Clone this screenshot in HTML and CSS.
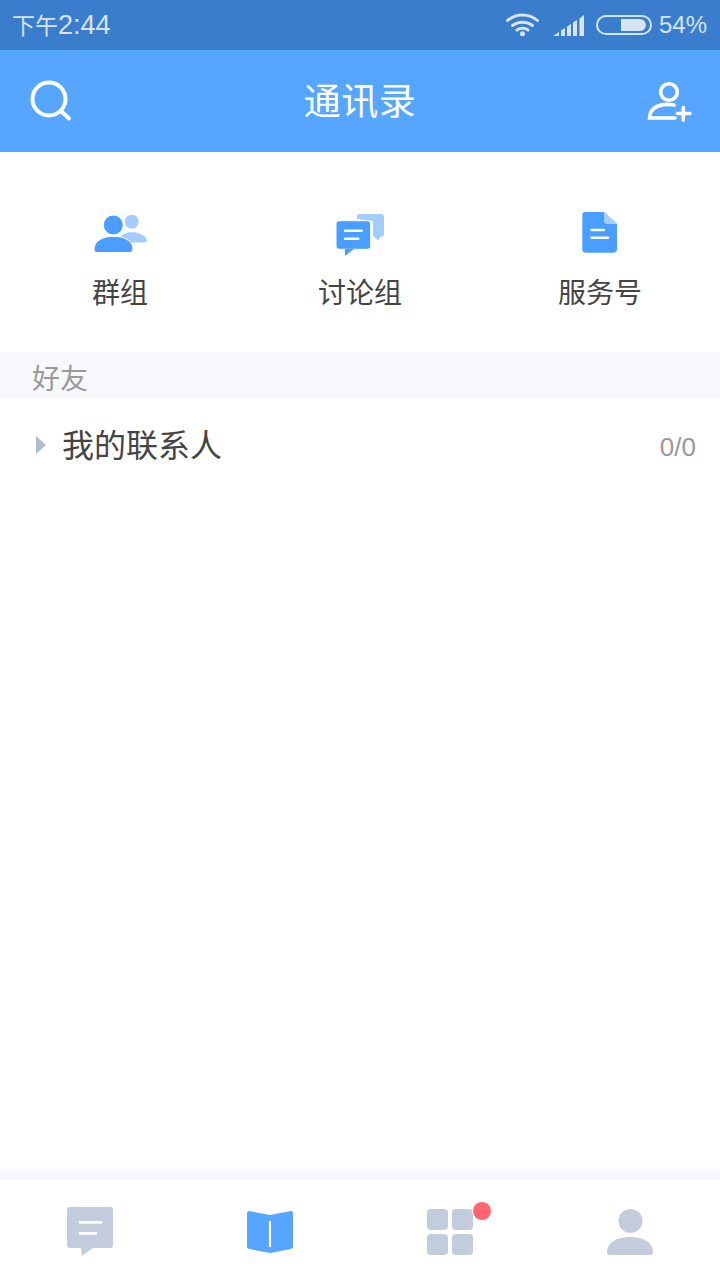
FILE: index.html
```html
<!DOCTYPE html>
<html lang="zh-CN">
<head>
    <meta charset="UTF-8">
    <meta name="viewport" content="width=device-width, initial-scale=1.0">
    <title>通讯录</title>
    <link rel="stylesheet" href="styles.css">
</head>
<body>
    <div class="page">
        <div class="status-bar">
            <div class="status-time"><span class="status-time-cn">下午</span>2:44</div>
            <div class="status-right">
                <svg class="status-wifi" width="33" height="24" viewBox="0 0 33 24">
                    <path d="M1.500 7.500C10 0 23 0 31.500 7.500" fill="none" stroke="#d6e4f5" stroke-width="3" stroke-linecap="round"/>
                    <path d="M6.500 12.500C12 8 21 8 26.500 12.500" fill="none" stroke="#d6e4f5" stroke-width="3" stroke-linecap="round"/>
                    <path d="M11 17C14 14.800 19 14.800 22 17" fill="none" stroke="#d6e4f5" stroke-width="3" stroke-linecap="round"/>
                    <circle cx="16.500" cy="20.800" r="2.500" fill="#d6e4f5"/>
                </svg>
                <svg class="status-signal" width="32" height="22" viewBox="0 0 32 22">
                    <path d="M0 21L6 17V21Z M8 15.500L12 13V21H8Z M14 11.500L18 9V21H14Z M20 7.500L24 5V21H20Z M26.500 3.500L31 0V21H26.500Z" fill="#d6e4f5"/>
                </svg>
                <div class="battery"><div class="battery-level"></div></div>
                <div class="status-percent">54%</div>
            </div>
        </div>

        <div class="header">
            <svg width="44" height="44" viewBox="0 0 44 44">
                <circle cx="19" cy="20" r="16.500" fill="none" stroke="#fff" stroke-width="4"/>
                <path d="M31 32L39 39.500" fill="none" stroke="#fff" stroke-width="4" stroke-linecap="round"/>
            </svg>
            <div class="header-title">通讯录</div>
            <svg width="46" height="42" viewBox="0 0 46 42">
                <circle cx="23" cy="12" r="8.300" fill="none" stroke="#fff" stroke-width="3.600"/>
                <path d="M28 25C16 23 4 26 3.500 38H29" fill="none" stroke="#fff" stroke-width="3.600" stroke-linecap="round"/>
                <path d="M37.300 27.500V40M31.500 33.500H44" fill="none" stroke="#fff" stroke-width="3.600" stroke-linecap="round"/>
            </svg>
        </div>

        <div class="shortcuts">
            <div class="shortcut">
                <svg width="54" height="44" viewBox="0 -2 54 44">
                    <circle cx="38.700" cy="7.700" r="7" fill="#a3cdff"/>
                    <path d="M27 23C32 17 46 16 53 24C55 27 53 28.500 51 28.500H37Z" fill="#a3cdff"/>
                    <circle cx="20.300" cy="11" r="10" fill="#4a9eff" stroke="#fff" stroke-width="1"/>
                    <path d="M1 35C1 18 40 18 40 35C40 37.500 38.500 38.500 36.500 38.500H4C2 38.500 1 37.500 1 35Z" fill="#4a9eff" stroke="#fff" stroke-width="1"/>
                </svg>
                <div class="shortcut-label">群组</div>
            </div>
            <div class="shortcut">
                <svg width="50" height="44" viewBox="0 -2 50 44">
                    <path d="M22 5V2C22 .8 23 0 24 0H46C48 0 49 1 49 3V20C49 22 48 22.700 46 22.700H45.500L43 26.700L38 22V7Z" fill="#a3cdff"/>
                    <rect x="1" y="6.700" width="34.700" height="28.600" rx="3" fill="#4a9eff" stroke="#fff" stroke-width="1"/>
                    <path d="M10 35H19L10 42Z" fill="#4a9eff"/>
                    <path d="M10 16.700H26.700M10 24.700H23.300" fill="none" stroke="#fff" stroke-width="2.500" stroke-linecap="round"/>
                </svg>
                <div class="shortcut-label">讨论组</div>
            </div>
            <div class="shortcut">
                <svg width="36" height="44" viewBox="0 0 36 44">
                    <path d="M3 0H22L35 12V37.700C35 39.700 33 40.700 31 40.700H4C2 40.700 .3 39.700 .3 37.700V3C.3 1 1 0 3 0Z" fill="#4a9eff"/>
                    <path d="M22 0L35 12H25C23.500 12 22 11 22 9.500Z" fill="#a3cdff"/>
                    <path d="M9.500 18H22M9.500 25.700H26" fill="none" stroke="#fff" stroke-width="2.500" stroke-linecap="round"/>
                </svg>
                <div class="shortcut-label">服务号</div>
            </div>
        </div>

        <div class="section-title">好友</div>

        <div class="contact-row">
            <div class="contact-arrow"></div>
            <div class="contact-name">我的联系人</div>
            <div class="contact-count">0/0</div>
        </div>

        <div class="spacer"></div>
        <div class="tab-shadow"></div>

        <div class="tabbar">
            <div class="tab">
                <svg width="46" height="50" viewBox="0 0 46 50">
                    <path d="M3 0H43C45 0 46 1 46 3V38C46 40 45 41 43 41H26L15 49L14 41H3C1 41 0 40 0 38V3C0 1 1 0 3 0Z" fill="#c2ccdc"/>
                    <path d="M13 15.300H34M13 26.300H29" fill="none" stroke="#fff" stroke-width="2.800" stroke-linecap="round"/>
                </svg>
            </div>
            <div class="tab">
                <svg width="46" height="42" viewBox="0 0 46 42">
                    <path d="M2 0L23 4L44 0C45 0 46 1 46 2V35C46 37 45 37 44 38L23 42L2 38C1 37 0 37 0 35V2C0 1 1 0 2 0Z" fill="#56a5ff"/>
                    <path d="M23 10V36" fill="none" stroke="#fff" stroke-width="2.200"/>
                </svg>
            </div>
            <div class="tab">
                <div class="tab-icon">
                    <svg width="46" height="46" viewBox="0 0 46 46">
                        <rect x="0" y="0" width="21" height="21" rx="4" fill="#c2ccdc"/>
                        <rect x="25" y="0" width="21" height="21" rx="4" fill="#c2ccdc"/>
                        <rect x="0" y="25" width="21" height="21" rx="4" fill="#c2ccdc"/>
                        <rect x="25" y="25" width="21" height="21" rx="4" fill="#c2ccdc"/>
                    </svg>
                    <span class="tab-badge"></span>
                </div>
            </div>
            <div class="tab">
                <svg width="46" height="46" viewBox="0 0 46 46">
                    <circle cx="23.500" cy="12" r="12" fill="#c2ccdc"/>
                    <path d="M0 43C0 33 11 28 23 28C35 28 46 33 46 43C46 45 45 46 43 46H3C1 46 0 45 0 43Z" fill="#c2ccdc"/>
                </svg>
            </div>
        </div>
    </div>
</body>
</html>
```

FILE: styles.css
```css
body {
    font-family: "Liberation Sans", "Noto Sans CJK SC", sans-serif;
    margin: 0;
    background-color: #fff;
}
.page {
    display: flex;
    flex-direction: column;
    height: 1280px;
    overflow: hidden;
}
.status-bar {
    display: flex;
    justify-content: space-between;
    align-items: center;
    height: 50px;
    padding: 0 13px 0 12px;
    background-color: #3b7dcd;
    color: #d6e4f5;
}
.status-time {
    font-size: 27px;
    padding-bottom: 3px;
}
.status-time-cn {
    font-size: 23px;
}
.status-right {
    display: flex;
    align-items: center;
    font-size: 24px;
}
.status-wifi {
    margin-right: 14px;
}
.status-signal {
    margin-right: 11px;
    margin-top: 1px;
}
.battery {
    display: flex;
    justify-content: flex-end;
    box-sizing: border-box;
    width: 56px;
    height: 20px;
    padding: 2px 4px 2px 0;
    margin-right: 7px;
    border: 2px solid #d6e4f5;
    border-radius: 10px;
}
.battery-level {
    width: 25px;
    background-color: #d6e4f5;
    border-radius: 0 6px 6px 0;
}
.header {
    display: flex;
    justify-content: space-between;
    align-items: center;
    height: 102px;
    padding: 0 28px 0 30px;
    background-color: #56a5ff;
}
.header-title {
    color: #fff;
    font-size: 37px;
    letter-spacing: 0.5px;
    padding-bottom: 4px;
}
.shortcuts {
    display: grid;
    grid-template-columns: repeat(3, 1fr);
    height: 200px;
}
.shortcut {
    display: flex;
    flex-direction: column;
    align-items: center;
    gap: 18px;
    padding-top: 60px;
}
.shortcut-label {
    color: #444;
    font-size: 28px;
    line-height: 40px;
}
.section-title {
    height: 46px;
    padding-left: 32px;
    background-color: #f6f8fb;
    color: #999;
    font-size: 28px;
    line-height: 56px;
    overflow: hidden;
}
.contact-row {
    display: flex;
    align-items: center;
    height: 96px;
    padding: 0 24px 0 36px;
}
.contact-arrow {
    width: 0;
    height: 0;
    margin-right: 17px;
    margin-bottom: 2px;
    border-left: 10px solid #b0bccb;
    border-top: 9px solid transparent;
    border-bottom: 9px solid transparent;
}
.contact-name {
    flex: 1;
    color: #444;
    font-size: 32px;
    padding-bottom: 6px;
    margin-left: -1px;
}
.contact-count {
    color: #999;
    font-size: 26px;
    padding-top: 2px;
}
.spacer {
    flex: 1;
}
.tab-shadow {
    height: 20px;
    background: linear-gradient(#fff, #f2f5fc);
}
.tabbar {
    display: grid;
    grid-template-columns: repeat(4, 1fr);
    height: 100px;
    background-color: #fff;
}
.tab {
    display: flex;
    justify-content: center;
    padding-top: 29px;
}
.tab:first-child {
    padding-top: 27px;
}
.tab:nth-child(2) {
    padding-top: 31px;
}
.tab-icon {
    position: relative;
    height: 46px;
}
.tab-badge {
    position: absolute;
    top: -8px;
    right: -19px;
    width: 18px;
    height: 18px;
    background-color: #ff6672;
    border: 1px solid #fff;
    border-radius: 50%;
}
```
